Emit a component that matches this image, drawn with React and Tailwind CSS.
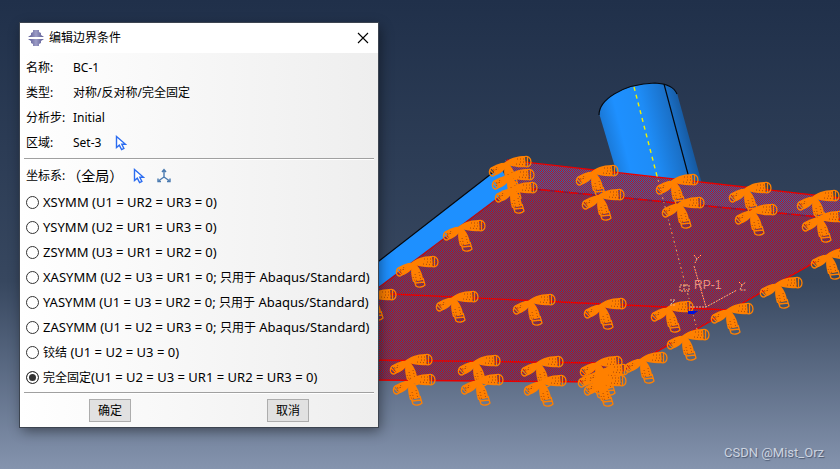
import React from "react";

const details = [
  { label: "名称:", value: "BC-1" },
  { label: "类型:", value: "对称/反对称/完全固定" },
  { label: "分析步:", value: "Initial" },
  { label: "区域:", value: "Set-3", pick: true },
];

const conditions = [
  { id: "xsymm", label: "XSYMM (U1 = UR2 = UR3 = 0)" },
  { id: "ysymm", label: "YSYMM (U2 = UR1 = UR3 = 0)" },
  { id: "zsymm", label: "ZSYMM (U3 = UR1 = UR2 = 0)" },
  { id: "xasymm", label: "XASYMM (U2 = U3 = UR1 = 0; ", only: "只用于", product: " Abaqus/Standard)" },
  { id: "yasymm", label: "YASYMM (U1 = U3 = UR2 = 0; ", only: "只用于", product: " Abaqus/Standard)" },
  { id: "zasymm", label: "ZASYMM (U1 = U2 = UR3 = 0; ", only: "只用于", product: " Abaqus/Standard)" },
  { id: "pinned", name: "铰结", label: " (U1 = U2 = U3 = 0)" },
  { id: "encastre", name: "完全固定", label: "(U1 = U2 = U3 = UR1 = UR2 = UR3 = 0)" },
];

// apex of every constraint symbol along the plate edges
const anchors = [
  [507, 163], [510, 176], [513, 189], [461, 227], [414, 263], [372, 296],
  [454, 298], [531, 301], [602, 305], [669, 308],
  [408, 361], [411, 381], [476, 362], [479, 381], [539, 363], [542, 382],
  [598, 363], [596, 374], [604, 371], [602, 382],
  [643, 359], [685, 336], [729, 310], [778, 284], [829, 255],
  [594, 172], [600, 196], [674, 181], [680, 204], [747, 189], [753, 211],
  [815, 197], [820, 218],
];

function PickButton({ label }) {
  return (
    <button type="button" aria-label={label} className="shrink-0">
      <svg width="12" height="16" viewBox="0 0 12 16" fill="none" stroke="#2b6cf0" strokeWidth="1.4">
        <path d="M1.5 1.5V12.5L4.3 10.2L6.6 14.6L8.9 13.4L6.8 9.3H10.5Z" fill="#fff" />
      </svg>
    </button>
  );
}

function Scene() {
  return (
    <svg
      className="absolute inset-0 h-full w-full"
      viewBox="0 0 840 469"
      preserveAspectRatio="xMidYMid slice"
      aria-hidden="true"
    >
      <defs>
        <pattern id="face" width="2" height="2" patternUnits="userSpaceOnUse" shapeRendering="crispEdges">
          <rect width="2" height="2" fill="#34508a" />
          <rect width="1" height="1" fill="#c60c12" />
          <rect x="1" y="1" width="1" height="1" fill="#c60c12" />
        </pattern>
        <pattern id="edgeFace" width="2" height="2" patternUnits="userSpaceOnUse" shapeRendering="crispEdges">
          <rect width="2" height="2" fill="#2068b8" />
          <rect width="1" height="1" fill="#cc1018" />
          <rect x="1" y="1" width="1" height="1" fill="#cc1018" />
        </pattern>
        <linearGradient id="tube" gradientUnits="userSpaceOnUse" x1="604" y1="135" x2="690" y2="114">
          <stop offset="0" stopColor="#1a78d6" />
          <stop offset="0.2" stopColor="#1e90ff" />
          <stop offset="0.5" stopColor="#1e8cf6" />
          <stop offset="0.8" stopColor="#1a6fc6" />
          <stop offset="1" stopColor="#154f8d" />
        </linearGradient>
        <g id="fixity">
          <path d="M-3 0C2 -4 8 -7 18 -7L19 4C12 5 6 3 0 2Z" fill="#ff8000" />
          <path d="M1 0C-5 -1 -11 1 -16 5L-11 12C-6 11 -2 6 1 2Z" fill="#ff8000" />
          <path d="M-1 0C-4 6 -3 12 -1 19L9 17C9 11 5 4 1 0Z" fill="#ff8000" />
          <g fill="none" stroke="#ff8000" strokeWidth="1.3">
            <path d="M16 -6C21 -8 24 -5 24 -1C24 3 21 5 17 3M20.500 -6V4" />
            <path d="M-13 4C-19 5 -19 13 -14 13L-10 11M-17 7L-12 12" />
            <path d="M0 17L2 23C5 25 9 24 11 22L9 15M1 20L10 19" />
          </g>
          <g fill="none" stroke="#a8480c" strokeWidth="1" strokeDasharray="1 2">
            <path d="M10 -4L20 -4M9 1L19 2M13 -1H20M-10 4L-14 10M-14 7L-8 6M1 11L3 19M5 9L7 18M-1 14L1 18" />
          </g>
        </g>
        <linearGradient id="logo">
          <stop offset="0" stopColor="#55558f" />
          <stop offset="0.5" stopColor="#9c9cc6" />
          <stop offset="1" stopColor="#55558f" />
        </linearGradient>
      </defs>

      <path d="M599 113C601 100 615 88 650 83Q672 83 677 93L702 184L617 174Z" fill="url(#tube)" />
      <path d="M599 115C599 100 622 84 655 83Q673 84 677 94M664 84L689 178" fill="none" stroke="#05080d" strokeWidth="1.2" />

      <path d="M370 268L500 167L513 189L370 294Z" fill="#1e90ff" />
      <path d="M370 268L500 167" stroke="#05080d" strokeWidth="1.2" />

      <path d="M505 160L840 198V220L513 188Z" fill="url(#edgeFace)" />
      <path d="M370 294L513 187L840 219V248L603 382L370 380Z" fill="url(#face)" />
      <g fill="none" stroke="#e80000" strokeWidth="1.4">
        <path d="M507 160L840 198" />
        <path d="M513 187L840 219" stroke="#801840" />
        <path d="M513 187L840 219" strokeDasharray="9 5" />
        <path d="M370 294L513 187" stroke="#b0101c" />
        <path d="M370 293L729 310M370 360L600 363M370 380L603 382L840 248" />
      </g>

      <path d="M634 87L657 176" stroke="#f0f000" strokeWidth="1.4" strokeDasharray="4 4" />
      <path d="M657 176L698 333" stroke="#f0a060" strokeDasharray="1 3 2 3" />

      {anchors.map(([x, y]) => (
        <use key={`${x}-${y}`} href="#fixity" x={x} y={y} />
      ))}

      <path d="M688 311H698L694 314H688Z" fill="#0010d8" />
      <g fill="none" stroke="#ffb080" strokeWidth="1" strokeDasharray="2 1">
        <path d="M694 266L706 307L737 290M690 307H706" />
        <path d="M694 255L697 259L701 255M697 259L695 263" />
        <path d="M739 282L742 285L746 282M742 285L740 290H746" />
        <path d="M670 300H675L670 305H675" />
        <path d="M680 285H689V291H680ZM684 285V291" />
      </g>
      <text x="694" y="289" fontSize="12" fill="#e89080" fontFamily="'Liberation Sans', sans-serif">
        RP-1
      </text>
    </svg>
  );
}

function Divider() {
  return <hr className="mx-1 h-[2px] border-0 border-t border-[#a0a0a0] bg-white" />;
}

export default function App() {
  return (
    <main className="relative min-h-screen overflow-hidden bg-linear-to-b from-[#20304a] via-[#37475f] via-60% to-[#8594ae] px-5 pt-[23px] pb-6 font-['Noto_Sans','Noto_Sans_CJK_SC',sans-serif] text-xs text-black">
      <Scene />

      <form
        className="relative w-full max-w-[358px] bg-linear-to-r from-white to-[#eeeeee] shadow-[0_0_0_1px_#3c4450,2px_4px_12px_rgba(0,0,0,0.45)]"
        onSubmit={(e) => e.preventDefault()}
      >
        <header className="flex h-[30px] items-center bg-white pr-[9px] pl-2">
          <svg width="16" height="16" viewBox="0 0 16 16" aria-hidden="true">
            <path d="M5 0H11V2L13 3V5L16 7H0L3 5V3L5 2Z" fill="url(#logo)" />
            <path d="M0 9H16L13 11V13L11 14V16H5V14L3 13V11Z" fill="url(#logo)" />
          </svg>
          <h1 className="ml-[5px] flex-1">编辑边界条件</h1>
          <button type="button" aria-label="关闭">
            <svg width="12" height="12" viewBox="0 0 12 12" stroke="#000" strokeWidth="1.1">
              <path d="M1 1L11 11M11 1L1 11" />
            </svg>
          </button>
        </header>

        <dl className="px-1.5 pt-0.5 pb-[3px]">
          {details.map((row) => (
            <div key={row.label} className="flex h-[25px] items-center">
              <dt className="w-[47px] shrink-0">{row.label}</dt>
              <dd className="flex items-center gap-3.5">
                {row.value}
                {row.pick && <PickButton label="选择区域" />}
              </dd>
            </div>
          ))}
        </dl>

        <Divider />

        <div className="flex h-[30px] items-center px-1.5 pt-0.5">
          <span>坐标系:</span>
          <span className="ml-0.5 text-sm">（全局）</span>
          <span className="ml-2.5 flex items-center gap-3">
            <PickButton label="选择坐标系" />
            <button type="button" aria-label="创建坐标系">
              <svg width="14" height="16" viewBox="0 0 14 16" fill="none" stroke="#4a7ab0" strokeWidth="1.4">
                <path d="M7 2V9L2 12.5M7 9L12 12.5M5 4L7 1.5L9 4M1 10.5V13.5H4M13 10.5V13.5H10" />
              </svg>
            </button>
          </span>
        </div>

        <fieldset className="px-1.5">
          {conditions.map((item) => (
            <label key={item.id} className="flex h-[25px] items-center gap-1 whitespace-nowrap">
              <input
                type="radio"
                name="condition"
                value={item.id}
                defaultChecked={item.id === "encastre"}
                className="size-[13px] shrink-0 appearance-none rounded-full border border-[#333] bg-white checked:bg-[#333] checked:shadow-[inset_0_0_0_2px_#fff]"
              />
              <span className="text-[13px]">
                {item.name && <span className="text-xs">{item.name}</span>}
                {item.label}
                {item.only && <span className="text-xs">{item.only}</span>}
                {item.product}
              </span>
            </label>
          ))}
        </fieldset>

        <div className="h-0.5" />
        <Divider />

        <footer className="flex justify-between px-[69px] py-[5px]">
          <button type="submit" className="h-[23px] w-[42px] border border-[#adadad] bg-[#e1e1e1]">
            确定
          </button>
          <button type="button" className="h-[23px] w-[42px] border border-[#adadad] bg-[#e1e1e1]">
            取消
          </button>
        </footer>
      </form>

      <p className="absolute right-4 bottom-2 font-[Roboto,sans-serif] text-[13px] text-[#cdd4e0] [text-shadow:1px_1px_1px_#4c5970]">
        CSDN @Mist_Orz
      </p>
    </main>
  );
}
